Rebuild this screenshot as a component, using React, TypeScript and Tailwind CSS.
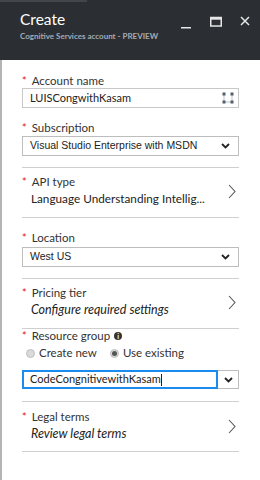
import React from 'react'

const labelFont = { fontFamily: 'Lato, "Noto Sans", sans-serif' }
const selectFont = { fontFamily: '"Liberation Sans", Arial, sans-serif' }

function Star() {
    return <span className="text-[#e81123] text-[11px] mr-[5px] leading-[14px]">*</span>
}

function Label({ text, info }: { text: string; info?: boolean }) {
    return (
        <div className="flex items-center h-[14px] text-[11.5px] leading-[14px] text-[#333]">
            <Star />
            <span>{text}</span>
            {info && (
                <span className="ml-[4px] w-[8px] h-[8px] rounded-full bg-[#333] text-white text-[7px] leading-[8px] font-bold flex items-center justify-center">i</span>
            )}
        </div>
    )
}

function ChevronDown() {
    return (
        <svg width="9" height="6" viewBox="0 0 9 6">
            <path d="M1 1 L4.5 4.5 L8 1" fill="none" stroke="#222" strokeWidth="1.8" />
        </svg>
    )
}

function ChevronRight() {
    return (
        <svg width="8" height="15" viewBox="0 0 8 15">
            <path d="M1 1 L7 7.5 L1 14" fill="none" stroke="#555" strokeWidth="1.1" />
        </svg>
    )
}

function Separator({ mt }: { mt: string }) {
    return <div className={`${mt} h-px bg-[#cfcfcf]`} />
}

function Blade({ label, value, italic, mt }: { label: string; value: string; italic?: boolean; mt: string }) {
    return (
        <div className={`${mt} flex items-center justify-between`}>
            <div>
                <Label text={label} />
                <div className={`mt-[2px] pl-[9px] h-[16px] leading-[16px] text-[#222] whitespace-nowrap ${italic ? 'italic text-[12.5px]' : 'text-[11.75px]'}`}>{value}</div>
            </div>
            <div className="mr-[3px]"><ChevronRight /></div>
        </div>
    )
}

export default function App() {
    return (
        <div className="w-[260px] h-[480px] bg-white overflow-hidden" style={labelFont}>
            {/* header */}
            <div className="h-[60px] bg-[#2b2f34]">
                <div className="w-[87px] h-[2px] bg-[#41464c]" />
                <div className="flex justify-between pl-[20px] pr-[10px] pt-[6px]">
                    <div>
                        <div className="text-white text-[15.5px] leading-[22px]">Create</div>
                        <div className="text-[#a3abb4] text-[8px] leading-[10px] mt-[1px] font-bold">Cognitive Services account - PREVIEW</div>
                    </div>
                    <div className="flex items-start gap-[18px] pt-[8px]">
                        <svg width="11" height="13" viewBox="0 0 11 13"><rect x="0" y="11" width="10" height="1.5" fill="#e6e6e6" /></svg>
                        <svg width="12" height="11" viewBox="0 0 12 11"><rect x="0.75" y="1.5" width="10.5" height="8.5" fill="none" stroke="#e6e6e6" strokeWidth="1.5" /><rect x="0.75" y="1.5" width="10.5" height="2.2" fill="#e6e6e6" /></svg>
                        <svg width="10" height="10" viewBox="0 0 10 10"><path d="M1 1 L9 9 M9 1 L1 9" stroke="#e6e6e6" strokeWidth="1.5" /></svg>
                    </div>
                </div>
            </div>

            {/* body */}
            <div className="h-[420px] border-l-2 border-[#b4b4b4] pl-[20px] pr-[21px] pt-[14px]">
                <Label text="Account name" />
                <div className="h-[20px] border border-[#c8c8c8] flex items-center justify-between pl-[7px] pr-[4px] text-[11px] text-[#222]">
                    <span>LUISCongwithKasam</span>
                    <svg width="12" height="12" viewBox="0 0 12 12">
                        <path d="M2 2 L2 10 M10 2 L10 10 M2 10 L10 10" stroke="#8a96a3" strokeWidth="0.6" />
                        <rect x="0.5" y="0.5" width="3" height="3" fill="#51606f" />
                        <rect x="8.5" y="0.5" width="3" height="3" fill="#51606f" />
                        <rect x="0.5" y="8.5" width="3" height="3" fill="#51606f" />
                        <rect x="8.5" y="8.5" width="3" height="3" fill="#51606f" />
                    </svg>
                </div>

                <div className="mt-[13px]"><Label text="Subscription" /></div>
                <div className="mt-[1px] h-[20px] border border-[#bdbdbd] flex items-center justify-between pl-[7px] pr-[8px] text-[10.5px] text-[#222]" style={selectFont}>
                    <span>Visual Studio Enterprise with MSDN</span>
                    <ChevronDown />
                </div>

                <Separator mt="mt-[11px]" />
                <Blade mt="mt-[7px]" label="API type" value="Language Understanding Intellig..." />
                <Separator mt="mt-[10px]" />

                <div className="mt-[13px]"><Label text="Location" /></div>
                <div className="mt-[2px] h-[20px] border border-[#bdbdbd] flex items-center justify-between pl-[7px] pr-[8px] text-[10.5px] text-[#222]" style={selectFont}>
                    <span>West US</span>
                    <ChevronDown />
                </div>

                <Separator mt="mt-[11px]" />
                <Blade mt="mt-[7px]" label="Pricing tier" value="Configure required settings" italic />
                <Separator mt="mt-[10px]" />

                <Label text="Resource group" info />
                <div className="mt-[2px] h-[16px] flex items-center text-[11.5px] text-[#333] pl-[4px]">
                    <span className="w-[9px] h-[9px] rounded-full bg-[#dadada] border border-[#bdbdbd]" />
                    <span className="ml-[4px]">Create new</span>
                    <span className="ml-[13px] w-[9px] h-[9px] rounded-full bg-[#dadada] border border-[#bdbdbd] flex items-center justify-center">
                        <span className="w-[5px] h-[5px] rounded-full bg-[#555]" />
                    </span>
                    <span className="ml-[4px]">Use existing</span>
                </div>

                <div className="mt-[9px] h-[19px] flex">
                    <div className="flex-1 border-2 border-[#1a8cf0] flex items-center pl-[6px] text-[11px] text-[#222]">
                        <span>CodeCongnitivewithKasam</span>
                        <span className="w-px h-[12px] bg-[#222]" />
                    </div>
                    <div className="w-[21px] border border-l-0 border-[#bdbdbd] flex items-center justify-center">
                        <ChevronDown />
                    </div>
                </div>

                <Separator mt="mt-[12px]" />
                <Blade mt="mt-[8px]" label="Legal terms" value="Review legal terms" italic />
                <Separator mt="mt-[9px]" />
            </div>
        </div>
    )
}
